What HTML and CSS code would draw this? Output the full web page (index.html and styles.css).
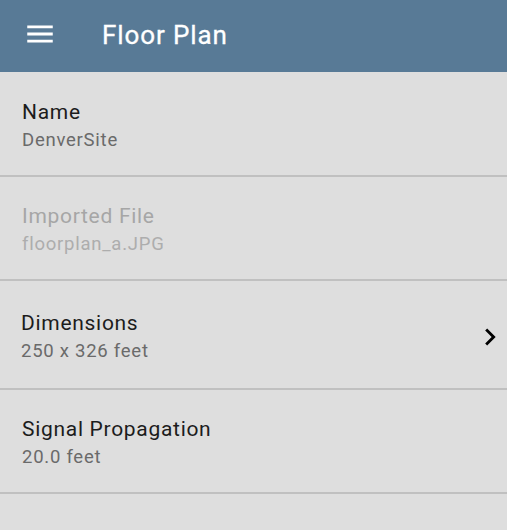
FILE: index.html
```html
<!DOCTYPE html>
<html>
<head>
<meta charset="utf-8">
<link rel="stylesheet" href="styles.css">
</head>
<body>
<header class="appbar">
  <svg class="menu-icon" viewBox="0 0 24 24" width="34" height="34"><path d="M3 18h18v-2H3v2zm0-5h18v-2H3v2zm0-7v2h18V6H3z" fill="#fff"/></svg>
  <h1 class="appbar-title">Floor Plan</h1>
</header>
<main class="list">
  <div class="row row-first">
    <div class="row-text">
      <div class="row-title">Name</div>
      <div class="row-sub">DenverSite</div>
    </div>
  </div>
  <div class="row row-disabled">
    <div class="row-text">
      <div class="row-title">Imported File</div>
      <div class="row-sub">floorplan_a.JPG</div>
    </div>
  </div>
  <div class="row row-nav">
    <div class="row-text">
      <div class="row-title">Dimensions</div>
      <div class="row-sub">250 x 326 feet</div>
    </div>
    <svg class="chevron" viewBox="0 0 24 24" width="34" height="34"><path d="M10 6L8.59 7.41 13.17 12l-4.58 4.59L10 18l6-6z" fill="#000"/></svg>
  </div>
  <div class="row">
    <div class="row-text">
      <div class="row-title">Signal Propagation</div>
      <div class="row-sub">20.0 feet</div>
    </div>
  </div>
</main>
</body>
</html>
```
FILE: styles.css
```css
html, body {
  margin: 0;
  padding: 0;
  background: #dedede;
  font-family: Roboto, "Noto Sans", sans-serif;
}
.appbar {
  height: 72px;
  background: #587a96;
  display: flex;
  align-items: center;
  padding-left: 23px;
  box-sizing: border-box;
}
.menu-icon {
  display: block;
  margin-top: -5px;
}
.appbar-title {
  margin: -2px 0 0 45px;
  color: #fff;
  font-size: 26px;
  font-weight: 400;
  letter-spacing: 0.9px;
  line-height: 28px;
  -webkit-text-stroke: 0.3px #fff;
}
.list {
  display: flex;
  flex-direction: column;
}
.row {
  display: flex;
  align-items: center;
  padding: 25px 0 21px 22px;
  border-bottom: 2px solid #c0c0c0;
}
.row-first {
  padding-top: 26px;
}
.row-nav {
  padding: 28px 0 23px 21px;
}
.row-text {
  flex: 1;
}
.row-title {
  font-size: 21px;
  line-height: 28px;
  letter-spacing: 0.7px;
  color: #1c1c1c;
}
.row-sub {
  font-size: 18.5px;
  line-height: 28px;
  letter-spacing: 0.75px;
  color: #6a6a6a;
}
.row-disabled .row-title {
  color: #a6a6a6;
}
.row-disabled .row-sub {
  color: #adadad;
}
.chevron {
  display: block;
  flex: none;
}
```
